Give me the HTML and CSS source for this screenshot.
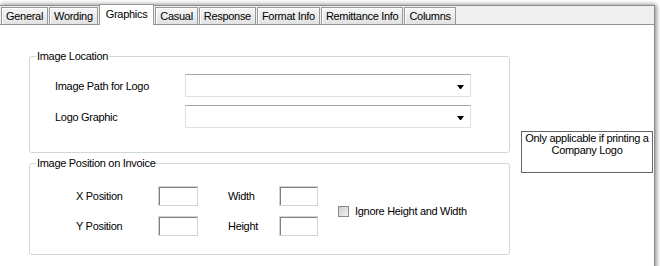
FILE: index.html
```html
<!DOCTYPE html>
<html lang="en">
<head>
    <meta charset="UTF-8">
    <title>Invoice Options - Graphics</title>
    <link rel="stylesheet" href="styles.css">
</head>
<body>
    <div class="window">
        <div class="tabs">
            <div class="tab">General</div>
            <div class="tab">Wording</div>
            <div class="tab active">Graphics</div>
            <div class="tab">Casual</div>
            <div class="tab">Response</div>
            <div class="tab">Format Info</div>
            <div class="tab">Remittance Info</div>
            <div class="tab">Columns</div>
        </div>
        <div class="page">
            <div class="groups">
                <fieldset class="group">
                    <legend>Image Location</legend>
                    <div class="location">
                        <div class="row">
                            <label>Image Path for Logo</label>
                            <div class="combo"></div>
                        </div>
                        <div class="row">
                            <label>Logo Graphic</label>
                            <div class="combo"></div>
                        </div>
                    </div>
                </fieldset>
                <fieldset class="group second">
                    <legend>Image Position on Invoice</legend>
                    <div class="position">
                        <div class="grid">
                            <label>X Position</label>
                            <div><input type="text" class="num"></div>
                            <label>Width</label>
                            <div><input type="text" class="num small"></div>
                            <label>Y Position</label>
                            <div><input type="text" class="num"></div>
                            <label>Height</label>
                            <div><input type="text" class="num small"></div>
                        </div>
                        <div class="check">
                            <span class="box"></span>
                            <span>Ignore Height and Width</span>
                        </div>
                    </div>
                </fieldset>
            </div>
            <div class="note">Only applicable if printing a<br>Company Logo</div>
        </div>
    </div>
</body>
</html>
```

FILE: styles.css
```css
body {
    margin: 0;
    font-family: "Liberation Sans", Arial, sans-serif;
    font-size: 11px;
    letter-spacing: -0.3px;
    color: #000;
    background: #fff;
}
.window {
    margin-top: 5px;
    width: 654px;
    height: 270px;
    border-top: 1px solid #8c8c8c;
    border-right: 1px solid #8c8c8c;
    background: #fff;
    box-shadow: 2px 0 4px rgba(0, 0, 0, 0.35), 0 -2px 4px rgba(0, 0, 0, 0.15);
}
.tabs {
    display: flex;
    align-items: flex-end;
    height: 18px;
    padding-left: 1px;
    background: #efefef;
    border-bottom: 1px solid #919191;
}
.tab {
    height: 16px;
    line-height: 17px;
    padding: 0 4px;
    margin-right: 1px;
    border: 1px solid #999;
    border-bottom: none;
    background: linear-gradient(#f6f6f6, #e2e2e2);
    box-shadow: inset 1px 1px #fff;
    white-space: nowrap;
}
.tab.active {
    height: 20px;
    line-height: 18px;
    padding: 0 6px;
    margin-bottom: -1px;
    background: #fff;
    box-shadow: none;
}
.page {
    display: flex;
    padding-top: 25px;
}
.groups {
    margin-left: 29px;
    width: 481px;
}
.group {
    margin: 0;
    padding: 0;
    min-width: 0;
    border: 1px solid #d0d7dc;
    border-radius: 3px;
}
.group legend {
    margin-left: 6px;
    padding: 0 1px;
    line-height: 13px;
}
.group.second {
    margin-top: 4px;
}
.location {
    padding: 11px 0 24px 25px;
}
.row {
    display: flex;
    align-items: center;
    height: 23px;
}
.row + .row {
    margin-top: 8px;
}
.row label {
    width: 130px;
}
.combo {
    position: relative;
    width: 284px;
    height: 21px;
    border: 1px solid;
    border-color: #a7a7a7 #dde1e5 #dde1e5 #dde1e5;
    background: #fff;
}
.combo::after {
    content: "";
    position: absolute;
    right: 6px;
    top: 10px;
    width: 1px;
    border-left: 3px solid transparent;
    border-right: 3px solid transparent;
    border-top: 4px solid #000;
}
.position {
    display: flex;
    align-items: center;
    padding: 16px 0 18px 46px;
}
.grid {
    display: grid;
    grid-template-columns: 82px 70px 51px 39px;
    grid-auto-rows: 20px;
    row-gap: 10px;
    align-items: center;
}
.grid > div {
    display: flex;
}
.num {
    box-sizing: border-box;
    width: 40px;
    height: 20px;
    margin: 0;
    padding: 0;
    border: 1px solid #d3d3d3;
    box-shadow: inset 1px 1px #808080;
    background: #fff;
}
.num.small {
    width: 39px;
}
.check {
    display: flex;
    align-items: center;
    gap: 6px;
    margin-left: 20px;
}
.box {
    box-sizing: border-box;
    width: 11px;
    height: 11px;
    border: 1px solid #8a8a8a;
    background: linear-gradient(135deg, #cfcfcf, #f2f2f2);
}
.note {
    box-sizing: border-box;
    width: 132px;
    height: 42px;
    margin: 81px 0 0 11px;
    border: 1px solid #646464;
    text-align: center;
    line-height: 12px;
    white-space: nowrap;
}
```
